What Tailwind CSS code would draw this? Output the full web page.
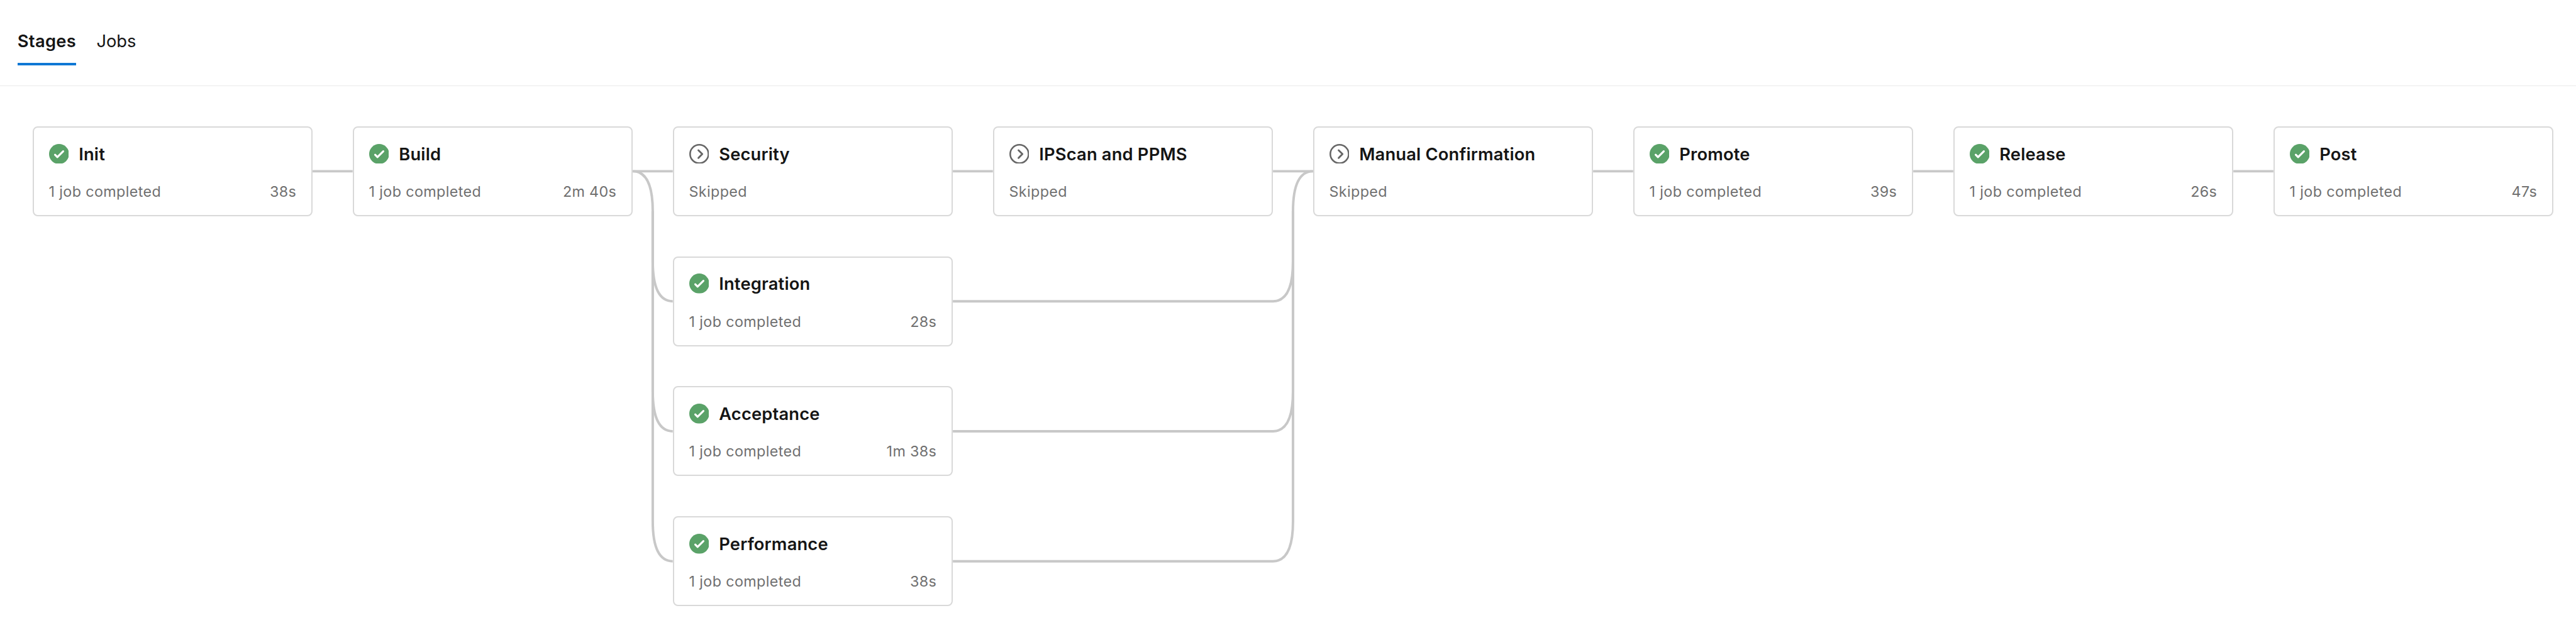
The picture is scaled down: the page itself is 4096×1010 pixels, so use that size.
<!DOCTYPE html>
<html lang="en">
<head>
<meta charset="utf-8">
<title>Pipeline stages</title>
<script src="https://cdn.jsdelivr.net/npm/@tailwindcss/browser@4"></script>
</head>
<body class="bg-white font-['Inter',sans-serif] text-[#151515]">
<svg class="hidden">
  <symbol id="success" viewBox="0 0 32 32">
    <circle cx="16" cy="16" r="16" fill="#5aa268"/>
    <path d="M9.6 17.2 13.3 21 22.6 11.8" fill="none" stroke="#fff" stroke-width="3.2" stroke-linecap="round" stroke-linejoin="round"/>
  </symbol>
  <symbol id="skipped" viewBox="0 0 32 32">
    <circle cx="16" cy="16" r="14.7" fill="none" stroke="#666" stroke-width="2.6"/>
    <path d="M14.6 10 20.8 16.1 14.6 22.3" fill="none" stroke="#666" stroke-width="2.9" stroke-linecap="round" stroke-linejoin="round"/>
  </symbol>
</svg>
<div class="flex h-[1010px] w-[4096px] flex-col overflow-hidden">
  <header class="flex h-[137px] shrink-0 items-start gap-[32.3px] border-b border-[#eaeaea] pl-[27.8px] pt-[45px] text-[27.3px] leading-[40px]">
    <div class="h-[59.4px] w-[93.5px] border-b-4 border-[#0f78d4] pt-px font-semibold tracking-[0.3px]">Stages</div>
    <div class="pt-px tracking-[-0.1px]">Jobs</div>
  </header>
  <main class="relative flex-1 pl-[51.7px] pt-[63.8px]">
    <svg class="absolute left-0 top-[-137px] h-[1010px] w-[4096px]" viewBox="0 0 4120 1016" preserveAspectRatio="none" fill="none" stroke="#c8c8c8" stroke-width="4">
      <path d="M500 274H564M1012 274H1076M1524 274H1588M2036 274H2100M2548 274H2612M3060 274H3124M3572 274H3636"/>
      <path d="M1012 274Q1044 274 1044 338V418Q1044 482 1076 482"/>
      <path d="M1044 338V626Q1044 690 1076 690"/>
      <path d="M1044 338V834Q1044 898 1076 898"/>
      <path d="M1524 482H2036Q2068 482 2068 418V338Q2068 274 2100 274"/>
      <path d="M1524 690H2036Q2068 690 2068 626V338"/>
      <path d="M1524 898H2036Q2068 898 2068 834V338"/>
    </svg>
    <div id="stages" class="relative grid grid-cols-[repeat(8,445.39px)] auto-rows-[143.15px] gap-x-[63.63px] gap-y-[63.62px]"></div>
  </main>
</div>
<script>
const stages = [
  ['Init', '38s'], ['Build', '2m 40s'], ['Security'], ['IPScan and PPMS'],
  ['Manual Confirmation'], ['Promote', '39s'], ['Release', '26s'], ['Post', '47s'],
  ['Integration', '28s', 'col-start-3 row-start-2'],
  ['Acceptance', '1m 38s', 'col-start-3 row-start-3'],
  ['Performance', '38s', 'col-start-3 row-start-4'],
];
document.getElementById('stages').innerHTML = stages.map(([name, time, place = '']) => `
  <div class="flex flex-col rounded-[8px] border-2 border-[#d9d9d9] bg-white px-[23.86px] pt-[25.8px] ${place}">
    <div class="flex h-[31.8px] items-center gap-[15.9px]">
      <svg class="size-[31.8px] shrink-0"><use href="#${time ? 'success' : 'skipped'}"/></svg>
      <div class="whitespace-nowrap pt-[2px] text-[27.3px] leading-[32px] font-semibold tracking-[0.18px]">${name}</div>
    </div>
    <div class="mt-[28.6px] flex justify-between text-[23.3px] leading-[32px] text-[#707070]">
      <div class="tracking-[0.38px]">${time ? '1 job completed' : 'Skipped'}</div>
      <div class="tracking-[0.35px]">${time || ''}</div>
    </div>
  </div>`).join('');
</script>
</body>
</html>
